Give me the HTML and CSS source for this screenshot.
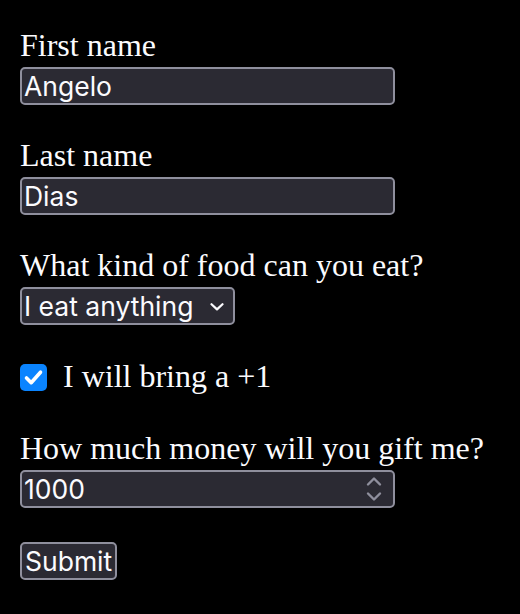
FILE: index.html
```html
<!DOCTYPE html>
<html lang="en">
<head>
<meta charset="utf-8">
<title>RSVP</title>
<link rel="stylesheet" href="styles.css">
</head>
<body>
<form class="rsvp">
  <div class="field">
    <label class="title" for="first">First name</label>
    <input class="control text" id="first" type="text" value="Angelo">
  </div>
  <div class="field">
    <label class="title" for="last">Last name</label>
    <input class="control text" id="last" type="text" value="Dias">
  </div>
  <div class="field">
    <label class="title" for="food">What kind of food can you eat?</label>
    <div class="select-wrap">
      <select class="control select" id="food">
        <option>I eat anything</option>
      </select>
      <svg class="select-arrow" width="14" height="8" viewBox="0 0 14 8"><path d="M1.5 1.2 L7 6.4 L12.5 1.2" fill="none" stroke="#fbfbfe" stroke-width="2.2" stroke-linecap="round" stroke-linejoin="round"/></svg>
    </div>
  </div>
  <div class="check-row">
    <span class="checkbox" role="checkbox" aria-checked="true">
      <svg width="27" height="27" viewBox="0 0 27 27"><path d="M6.5 14 L11.2 18.7 L20.5 8.2" fill="none" stroke="#fff" stroke-width="3.6" stroke-linecap="round" stroke-linejoin="round"/></svg>
    </span>
    <label class="check-label">I will bring a +1</label>
  </div>
  <div class="field money">
    <label class="title" for="gift">How much money will you gift me?</label>
    <div class="number-wrap">
      <input class="control text number" id="gift" type="number" value="1000">
      <svg class="spinner" width="16" height="26" viewBox="0 0 16 26"><path d="M2 8.5 L8 2.5 L14 8.5" fill="none" stroke="#8f8f9d" stroke-width="2.4" stroke-linecap="round" stroke-linejoin="round"/><path d="M2 17.5 L8 23.5 L14 17.5" fill="none" stroke="#8f8f9d" stroke-width="2.4" stroke-linecap="round" stroke-linejoin="round"/></svg>
    </div>
  </div>
  <button class="control submit" type="button">Submit</button>
</form>
</body>
</html>
```
FILE: styles.css
```css
html, body {
  margin: 0;
  background: #000;
}

body {
  color: #fbfbfe;
  font-family: "Liberation Serif", "Times New Roman", serif;
  font-size: 32px;
  line-height: 36px;
}

.rsvp {
  display: flex;
  flex-direction: column;
  align-items: flex-start;
  padding: 27px 20px 0 20px;
}

.field {
  display: flex;
  flex-direction: column;
  align-items: flex-start;
  margin-bottom: 32px;
}

.title {
  display: block;
  margin-bottom: 4px;
}

.control {
  box-sizing: border-box;
  height: 38px;
  margin: 0;
  border: 2px solid #8f8f9d;
  border-radius: 5px;
  background: #2b2a33;
  color: #fbfbfe;
  font-family: "Inter", "Noto Sans", sans-serif;
  font-size: 26.5px;
  line-height: 34px;
  padding: 0 2px;
  outline: none;
}

.text {
  width: 375px;
}

.select-wrap,
.number-wrap {
  position: relative;
  display: flex;
}

.select {
  -webkit-appearance: none;
  appearance: none;
  width: 215px;
  padding-right: 30px;
}

.select-arrow {
  position: absolute;
  left: 190px;
  top: 16px;
}

.number {
  -moz-appearance: textfield;
  appearance: textfield;
}

.number::-webkit-inner-spin-button,
.number::-webkit-outer-spin-button {
  -webkit-appearance: none;
  margin: 0;
}

.spinner {
  position: absolute;
  left: 346px;
  top: 6px;
}

.check-row {
  display: flex;
  align-items: flex-start;
  margin-top: 1px;
  margin-bottom: 36px;
}

.checkbox {
  display: block;
  width: 27px;
  height: 27px;
  margin-top: 6px;
  border-radius: 5px;
  background: #0a84ff;
}

.checkbox svg {
  display: block;
}

.check-label {
  margin-left: 16px;
}

.money {
  margin-bottom: 34px;
}

.submit {
  width: auto;
  padding: 0 3px;
}
```
